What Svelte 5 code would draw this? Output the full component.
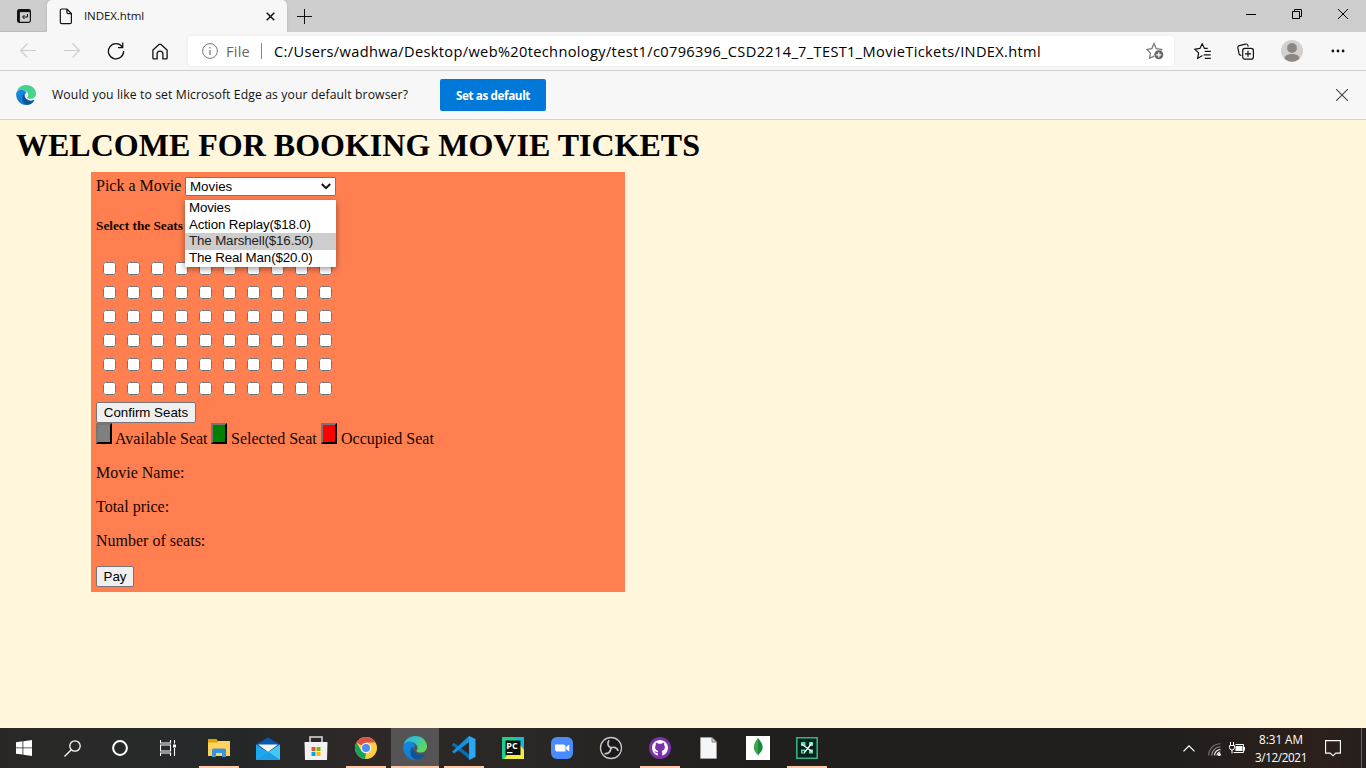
<script>
  const seatRows = Array.from({ length: 6 }, (_, r) => r);
  const seatCols = Array.from({ length: 10 }, (_, c) => c);
  const movies = ['Movies', 'Action Replay($18.0)', 'The Marshell($16.50)', 'The Real Man($20.0)'];
  const highlighted = 2;

  // Spreads a label's letter-spacing so that it fills the given width.
  function fit(node, width) {
    const w = node.getBoundingClientRect().width;
    const n = node.textContent.length;
    node.style.letterSpacing = (width - w) / n + 'px';
  }
</script>

<div class="screen">
  <header class="tabs">
    <div class="tabmenu">
      <svg width="16" height="16" viewBox="0 0 16 16" fill="none" stroke="#111" stroke-width="1.2"><rect x="1.6" y="1.6" width="12.8" height="12.8" rx="1.8"/><path d="M2 3h12" stroke-width="2.2"/><path d="M2.800 3v11" stroke-width="2.200"/><path d="M11.500 6v3H7M8.500 7 6.500 9l2 2" stroke-width="1"/></svg>
    </div>
    <div class="tab">
      <svg width="14" height="17" viewBox="0 0 14 17" fill="none" stroke="#111" stroke-width="1.2"><path d="M2.8 1h5.1l4.5 4.6v8.6a1.5 1.5 0 0 1-1.5 1.5H2.8a1.5 1.5 0 0 1-1.5-1.5V2.5A1.5 1.5 0 0 1 2.8 1zM7.9 1v3.2a1.4 1.4 0 0 0 1.4 1.4h3.1"/></svg>
      <span class="tabtitle"><span use:fit={60}>INDEX.html</span></span>
      <svg class="tabclose" width="9" height="9" viewBox="0 0 9 9" stroke="#111" stroke-width="1.5"><path d="M.7.7l7.6 7.6M8.3.7.7 8.3"/></svg>
    </div>
    <svg class="plus" width="15" height="15" viewBox="0 0 15 15" stroke="#111"><path d="M7.500 0v15M0 7.500h15"/></svg>
    <div class="windowbtns">
      <svg width="10" height="10" viewBox="0 0 10 10" stroke="#000"><path d="M0 5.5h10"/></svg>
      <svg width="10" height="10" viewBox="0 0 10 10" fill="none" stroke="#000"><path d="M.5 2.5h7v7h-7zM2.5 2.5v-2h7v7h-2"/></svg>
      <svg width="10" height="10" viewBox="0 0 10 10" stroke="#000"><path d="M0 0l10 10M10 0 0 10"/></svg>
    </div>
  </header>

  <nav class="toolbar">
    <div class="navicons">
      <svg width="16" height="16" viewBox="0 0 16 16" fill="none" stroke="#ccc" stroke-width="1.1"><path d="M16 7.500H.8M7.500.5.6 7.500l6.900 7"/></svg>
      <svg width="16" height="16" viewBox="0 0 16 16" fill="none" stroke="#ccc" stroke-width="1.1"><path d="M0 7.500h15.200M8.500.5l6.900 7-6.900 7"/></svg>
      <svg width="18" height="18" viewBox="0 0 18 18" fill="none" stroke="#111" stroke-width="1.3"><path d="M15.2 4.9A7.6 7.6 0 1 0 16.6 9M15.7.6v5H11"/></svg>
      <svg width="16" height="17" viewBox="0 0 16 17" fill="none" stroke="#111" stroke-width="1.3"><path d="M7 1.6.9 7v7.9c0 .6.3.9.9.9h3.3v-4.7a2.900 2.900 0 0 1 5.8 0v4.7h3.3c.6 0 .9-.3.9-.9V7L9 1.6a1.500 1.500 0 0 0-2 0z"/></svg>
    </div>
    <div class="address">
      <svg width="16" height="16" viewBox="0 0 16 16" fill="none" stroke="#777"><circle cx="8" cy="8" r="7.4"/><path d="M8 7v5M8 4v1.6" stroke-width="1.2"/></svg>
      <span class="scheme"><span use:fit={24}>File</span></span>
      <span class="divider"></span>
      <span class="url"><span use:fit={767}>C:/Users/wadhwa/Desktop/web%20technology/test1/c0796396_CSD2214_7_TEST1_MovieTickets/INDEX.html</span></span>
      <svg class="addstar" width="18" height="18" viewBox="0 0 18 18" fill="none" stroke="#777" stroke-width="1.2"><path d="M8 14.1l-4.400 2.200.8-5.200L1 7.500l4.800-.9L8 1.600l2.200 5 5.400.9-1 1"/><circle cx="12.8" cy="12.800" r="4.500" fill="#666" stroke="none"/><path d="M12.800 10.200v5.200M10.200 12.800h5.200" stroke="#fff"/></svg>
    </div>
    <div class="tools">
      <svg width="18" height="17" viewBox="0 0 18 17" fill="none" stroke="#111" stroke-width="1.2"><path d="M8.500 12.500l-4.800 2.900.9-5.500L.9 6.200l5-.8 2.300-4.600 2.300 4.600h3.200M10.800 8.300h6M9.700 11.800h7M10.800 15.300h6"/></svg>
      <svg width="18" height="17" viewBox="0 0 18 17" fill="none" stroke="#111" stroke-width="1.2"><path d="M4.400 12.400C2.800 12.500 2.400 12 2 10.700L.9 5.200c-.3-1.600.1-2.300 1.500-2.600l6-1.500c1.400-.3 2.100 0 2.500 1.300l.3 1.200"/><rect x="5.700" y="5.400" width="10.700" height="10.700" rx="2.200"/><path d="M11 7.800v6M8 10.800h6"/></svg>
      <svg width="22" height="22" viewBox="0 0 22 22"><circle cx="11" cy="11" r="11" fill="#d2d0ce"/><circle cx="11" cy="8" r="4.900" fill="#8b8683"/><path d="M3.600 18.800c0-3.200 3-4.800 7.400-4.800s7.400 1.600 7.400 4.800a11 11 0 0 1-14.800 0z" fill="#8b8683"/></svg>
      <svg width="14" height="4" viewBox="0 0 14 4" fill="#111"><circle cx="1.900" cy="2" r="1.400"/><circle cx="7" cy="2" r="1.400"/><circle cx="12.100" cy="2" r="1.400"/></svg>
    </div>
  </nav>

  {#snippet edge(size, top, mid, end)}
    <svg width={size} height={size} viewBox="0 0 24 24">
      <defs>
        <linearGradient id="eg{size}" x1="0" x2="1" y1="0" y2=".5"><stop offset="0" stop-color={top}/><stop offset=".5" stop-color={mid}/><stop offset="1" stop-color={end}/></linearGradient>
        <linearGradient id="eb{size}" x1="0" x2="1" y1="0" y2="1"><stop offset="0" stop-color="#138de0"/><stop offset="1" stop-color="#1172c8"/></linearGradient>
      </defs>
      <path fill="url(#eg{size})" d="M.6 9C1.800 3.700 6.300 0 12 0c7 0 12 4.800 12 10.400 0 3.800-2.900 6.100-6.400 6.100-2.800 0-4.200-.8-4.200-1.600 0-.6 1.200-1.100 1.200-3C14.600 8.500 10.500 5.600 6.500 5.700 4 5.800 1.800 7 .6 9z"/>
      <path fill="url(#eb{size})" d="M.1 11.200C.2 17 4 24 12.200 24c4.200 0 7.600-2.200 9.600-5.600-4 2.200-10 .6-11.200-4-.6-2.500.6-4.300 2-5C11.500 7 9 5.700 6.500 5.700 3 5.700.3 8.300.1 11.200z"/>
      <path fill="#10539b" d="M9.500 10.500c-4 4.500-2 12.700 4.500 13.300 3.500-.4 6-2.300 8-5.300.3-.6-.1-.8-.6-.5-5 2.500-11.400-1.200-11.900-7.500z"/>
    </svg>
  {/snippet}

  <section class="prompt">
    {@render edge(20, '#3fcf96', '#45d08c', '#4ad48a')}
    <span class="question"><span use:fit={356}>Would you like to set Microsoft Edge as your default browser?</span></span>
    <div class="setdefault"><span use:fit={74}>Set as default</span></div>
    <svg class="dismiss" width="12" height="12" viewBox="0 0 12 12" stroke="#444" stroke-width="1.1"><path d="M0 0l12 12M12 0 0 12"/></svg>
  </section>

  <main>
    <h1><span use:fit={684}>WELCOME FOR BOOKING MOVIE TICKETS</span></h1>
    <div class="booking">
      <div class="pick">
        <span>Pick a Movie</span>
        <div class="select">
          <span>Movies</span>
          <svg width="10" height="7" viewBox="0 0 10 7" fill="none" stroke="#111" stroke-width="2"><path d="M.8 1l4.200 4.200L9.200 1"/></svg>
          <div class="menu">
            {#each movies as m, i}
              <div class="option" class:active={i === highlighted}>{m}</div>
            {/each}
          </div>
        </div>
      </div>
      <h5>Select the Seats</h5>
      <div class="seats">
        {#each seatRows as r}
          {#each seatCols as c}
            <input type="checkbox" aria-label="Seat {r * 10 + c + 1}" />
          {/each}
        {/each}
      </div>
      <div class="btn confirm">Confirm Seats</div>
      <div class="legend">
        <i class="gray"></i><span class="l1">Available Seat</span>
        <i class="green"></i><span class="l2">Selected Seat</span>
        <i class="red"></i><span>Occupied Seat</span>
      </div>
      <p>Movie Name:</p>
      <p>Total price:</p>
      <p>Number of seats:</p>
      <div class="btn pay">Pay</div>
    </div>
  </main>

  <footer>
    <div class="system">
      <div><svg width="16" height="16" viewBox="0 0 16 16" fill="#fff"><path d="M0 2.200 6.500 1.300v6.200H0zM7.300 1.200 16 0v7.500H7.300zM0 8.300h6.500v6.300L0 13.700zM7.300 8.300H16V16l-8.700-1.200z"/></svg></div>
      <div><svg width="17" height="17" viewBox="0 0 17 17" fill="none" stroke="#fff" stroke-width="1.300"><circle cx="11" cy="6" r="5.200"/><path d="M7.300 9.700.5 16.500"/></svg></div>
      <div><svg width="16" height="16" viewBox="0 0 16 16" fill="none" stroke="#fff" stroke-width="2"><circle cx="8" cy="8" r="6.900"/></svg></div>
      <div><svg width="16" height="16" viewBox="0 0 16 16" fill="none" stroke="#fff" stroke-width="1.100"><path d="M.5 0v3h10V0M.5 16v-3h10v3M.5 5h10v6H.5zM14.500 0v3.500M14.500 8v8"/><path d="M13 4.500h3v3h-3z" fill="#fff" stroke="none"/></svg></div>
    </div>
    <div class="apps">
      <div class="run"><svg width="22" height="20" viewBox="0 0 22 20"><path fill="#e2a100" d="M0 1h8.500l1.500 2H22v3H0z"/><path fill="#ffd35c" d="M0 4.500h9L10.500 3H22v15H0z"/><path fill="#3c94da" d="M4 12a1.500 1.500 0 0 1 1.500-1.500h11A1.500 1.500 0 0 1 18 12v7h-4v-4H8v4H4z"/></svg></div>
      <div><svg width="24" height="23" viewBox="0 0 24 23"><path fill="#075ab0" d="M0 7.500 12 .5l12 7v3H0z"/><path fill="#f4f4f4" d="M2 7.500h20L12 15z"/><path fill="#1ca7f0" d="M0 7.500 12 15 24 23H0z"/><path fill="#42c8f7" d="M24 7.500V23L12 15z"/><path fill="#1b9fe8" d="M0 23l12-8 12 8z"/></svg></div>
      <div class="store"><svg width="24" height="24" viewBox="0 0 24 24"><path d="M6 7V1h12v6" fill="none" stroke="#ddd" stroke-width="1.500"/><path fill="#f1f1f1" d="M.5 6h23L23 24H1z"/><path fill="#f25022" d="M7.500 11h4v4h-4z"/><path fill="#7fba00" d="M12.500 11h4v4h-4z"/><path fill="#00a4ef" d="M7.500 16h4v4h-4z"/><path fill="#ffb900" d="M12.500 16h4v4h-4z"/></svg></div>
      <div class="run"><svg width="22" height="22" viewBox="0 0 22 22"><circle cx="11" cy="11" r="11" fill="#ffcd40"/><path fill="#de5246" d="M11 11 1.500 5.500A11 11 0 0 1 20.500 5.500H11z"/><path fill="#1aa15f" d="M1.500 5.500 6.500 14 11 16l-1 6A11 11 0 0 1 1.500 5.500z"/><circle cx="11" cy="11" r="5.200" fill="#f5f5f5"/><circle cx="11" cy="11" r="4" fill="#4d8bf5"/></svg></div>
      <div class="run current">{@render edge(24, '#2bb0e6', '#33c4c4', '#5fd858')}</div>
      <div class="run"><svg width="24" height="24" viewBox="0 0 24 24"><path fill="#0071b8" d="M0 8.300 2 6.700 18 19v4.700L.3 9.300z"/><path fill="#1492dc" d="M0 15.700 17 0l1.500 5L2 17.400z"/><path fill="#28a9ef" d="M17 0l6.500 3v18L17 24z"/></svg></div>
      <div><svg width="22" height="22" viewBox="0 0 22 22"><path fill="#20cf88" d="M0 0h22v22H0z"/><path fill="#f4ec43" d="M2 22 18 3l4 9v10z"/><path fill="#18b8d4" d="M12 0h10v13z"/><path fill="#0c1110" d="M3.500 3.500h15V18h-15z"/><text x="4.300" y="11.500" fill="#fff" font-size="9" font-weight="700" font-family="Open Sans, sans-serif">PC</text><path fill="#fff" d="M5 15h5.500v1.200H5z"/></svg></div>
      <div><svg width="22" height="22" viewBox="0 0 22 22"><rect width="22" height="22" rx="6" fill="#4a8cff"/><path fill="#fff" d="M4 7.500h8.500a2 2 0 0 1 2 2v5H6a2 2 0 0 1-2-2zM15.200 9.800 18.300 7.500v7l-3.100-2.200z"/></svg></div>
      <div><svg width="24" height="24" viewBox="0 0 24 24" fill="none" stroke="#c8c8c8" stroke-width="1.300"><circle cx="12" cy="12" r="10.500" fill="#1b191c"/><path d="M10 4.200c-2.200 3.200-1 6.300 1.800 7.600M11.800 12c2.800-1.600 6.500-.5 7.400 3M11.800 12c.2 3.600-2.600 6.200-6.200 5.600" stroke-width="1.700"/><circle cx="12" cy="12" r="1.200" fill="#c8c8c8" stroke="none"/></svg></div>
      <div class="run"><svg width="22" height="22" viewBox="0 0 22 22"><circle cx="11" cy="11" r="11" fill="#7c32a8"/><path fill="#fff" d="M11 3a8 8 0 0 0-2.800 15.500c.5.100.6-.2.600-.5v-2c-2.200.5-2.700-.9-3.400-1.800 1.600-.2 1.700 1.400 3.400 1 .1-.6.300-1 .6-1.200-3.500-.6-4-4-2.500-5.900-.3-1-.1-1.800.2-2.300.8 0 1.700.6 2.300 1h3.200c.6-.4 1.500-1 2.300-1 .3.500.5 1.300.2 2.300 1.500 1.900 1 5.300-2.500 5.900.4.400.6 1 .6 1.800v2.200c0 .3.200.6.600.5A8 8 0 0 0 11 3z"/></svg></div>
      <div class="doc"><svg width="17" height="22" viewBox="0 0 17 22"><path fill="#f5f6f7" stroke="#aaa" stroke-width=".6" d="M.5.500h11.500l4.500 4.500v16.500H.5z"/><path fill="#ddd" stroke="#666" stroke-width=".8" d="M12 .5V5h4.500z"/></svg></div>
      <div><svg width="24" height="24" viewBox="0 0 24 24"><path fill="#fff" d="M0 0h24v24H0z"/><path fill="#47a248" d="M12 2C9.500 5 7.800 7.700 7.800 11.300c0 3 1.500 5.400 3.700 7.200l.5 2z"/><path fill="#168b40" d="M12 2c2.500 3 4.700 5.700 4.700 9.300 0 3-2 5.400-4.200 7.200l-.5 2z"/></svg></div>
      <div class="run"><svg width="22" height="22" viewBox="0 0 22 22"><path fill="#04231d" stroke="#35b185" stroke-width="1.600" d="M.8.800h20.400v20.400H.8z"/><path fill="#5fdcae" d="M5 5h4.500v4H5zM13 5h4v4h-4zM5 12.500h4v4H5zM13 12.500h4v4h-4z"/><path fill="none" stroke="#f0fff8" stroke-width="1.300" d="M5.500 7 16 14.500M8 16 16 6"/><path fill="#04231d" d="M6.500 14h1.500v1.500H6.500z"/></svg></div>
    </div>
    <div class="tray">
      <svg class="up" width="12" height="7" viewBox="0 0 12 7" fill="none" stroke="#fff" stroke-width="1.300"><path d="M.5 6.400 6 .9l5.500 5.500"/></svg>
      <svg class="wifi" width="13" height="13" viewBox="0 0 13 13" fill="none" stroke="#777" stroke-width="1.100"><path d="M.7 12.500A11.700 11.700 0 0 1 12.400.8"/><path d="M3.700 12.500a8.700 8.700 0 0 1 8.700-8.700" stroke="#999"/><path d="M6.500 12.500a6 6 0 0 1 6-6M9 12.500A3.400 3.400 0 0 1 12.400 9" stroke="#eee"/><circle cx="11.300" cy="11.500" r="1.500" fill="#fff" stroke="none"/></svg>
      <svg class="battery" width="17" height="12" viewBox="0 0 17 12" fill="none" stroke="#fff"><path d="M1.500 0v3M4.500 0v3M.5 3.500h5v2a2.500 2.500 0 0 1-5 0zM3 8v3.500M6.500 2.500h8v8H4.500M15.500 5v3.500"/><path fill="#fff" stroke="none" d="M6.500 4h7v5h-7z"/></svg>
      <div class="clock"><div><span use:fit={44}>8:31 AM</span></div><div><span use:fit={52}>3/12/2021</span></div></div>
      <svg class="note" width="16" height="17" viewBox="0 0 16 17" fill="none" stroke="#fff" stroke-width="1.100"><path d="M.6.600h14.800v12.500h-4.600L8 15.800l-2.800-2.700H.6z"/></svg>
      <span class="peek"></span>
    </div>
  </footer>
</div>

<style>
  :global(body) { background: #fff6dc; overflow: hidden; }
  .screen { width: 1366px; height: 768px; display: flex; flex-direction: column; overflow: hidden; background: #fff6dc; font-family: 'Open Sans', 'Noto Sans', sans-serif; color: #111; }
  svg { display: block; flex: none; }
  span { white-space: nowrap; }

  .tabs { height: 32px; flex: none; display: flex; align-items: center; background: #cdcdcd; }
  .tabmenu { width: 47px; height: 32px; box-sizing: border-box; padding-left: 16px; display: flex; align-items: center; border-bottom: 1px solid #bcbcbc; border-radius: 0 0 4px 0; }
  .tab { width: 240px; height: 32px; box-sizing: border-box; background: #f7f7f7; border-radius: 5px 5px 0 0; display: flex; align-items: center; padding-left: 12px; box-shadow: 0 0 2px #aaa; }
  .tabtitle { font-size: 11.500px; margin-left: 11px; width: 182px; padding-bottom: 1px; }
  .plus { margin-left: 10px; }
  .windowbtns { margin-left: auto; padding: 0 18px 4px 0; display: flex; gap: 36px; }

  .toolbar { height: 39px; box-sizing: border-box; flex: none; display: flex; align-items: center; background: #f7f7f7; border-bottom: 1px solid #cfcfcf; }
  .navicons { width: 168px; padding-left: 20px; display: flex; align-items: center; gap: 28px; }
  .navicons svg:nth-child(3) { margin: 0 -1px; }
  .address { width: 986px; height: 30px; box-sizing: border-box; background: #fff; border-radius: 4px; display: flex; align-items: center; padding-left: 14px; box-shadow: 0 0 3px #e6e6e6; }
  .scheme { font-size: 14.500px; margin-left: 8px; width: 35px; color: #666; }
  .divider { width: 1px; height: 16px; background: #888; }
  .url { font-size: 14.600px; margin-left: 12px; width: 872px; color: #000; }
  .tools { display: flex; align-items: center; padding-left: 20px; }
  .tools svg:nth-child(2) { margin-left: 25px; }
  .tools svg:nth-child(3) { margin-left: 26px; }
  .tools svg:nth-child(4) { margin-left: 28px; }

  .prompt { height: 49px; box-sizing: border-box; flex: none; display: flex; align-items: center; background: #f7f7f7; border-bottom: 1px solid #d6d2c8; padding-left: 16px; }
  .question { font-size: 12.200px; margin-left: 16px; width: 388px; padding-bottom: 2px; }
  .setdefault { width: 106px; height: 32px; border-radius: 2px; background: #0078d7; color: #fff; font-size: 11.700px; font-weight: 700; display: flex; align-items: center; justify-content: center; }
  .dismiss { margin-left: auto; margin-right: 18px; }

  main { height: 608px; box-sizing: border-box; flex: none; padding-top: 7px; background: #fff6dc; font-family: 'Liberation Serif', serif; font-size: 16px; color: #000; }
  h1 { margin: 0 0 0 16px; font-size: 32px; line-height: 37px; height: 45px; }
  .booking { width: 534px; height: 420px; box-sizing: border-box; margin-left: 91px; padding: 5px 0 0 5px; background: #ff7f50; color: #140600; }
  .pick { display: flex; height: 19px; }
  .pick > span { width: 89px; line-height: 18px; }
  .select { position: relative; width: 151px; height: 19px; box-sizing: border-box; border: 1px solid #767676; border-radius: 1px; background: #fff; color: #000; font: 13.333px/17px 'Liberation Sans', sans-serif; display: flex; align-items: center; justify-content: space-between; padding: 0 4px; }
  .menu { position: absolute; z-index: 2; left: -1px; top: 22px; width: 151px; height: 67px; background: #fff; box-shadow: 0 2px 6px rgba(0, 0, 0, .4); }
  .option { height: 16.670px; line-height: 16.500px; padding-left: 4px; white-space: nowrap; letter-spacing: -.13px; }
  .option.active { background: #cdcdcd; color: #222; }
  h5 { margin: 22px 0 0; font-size: 13.280px; line-height: 15px; }
  .seats { margin: 20px 0 0 2px; display: grid; grid-template-columns: repeat(10, 24px); grid-auto-rows: 24px; place-items: center; width: 240px; }
  .seats input { margin: 7px 0 0 -2px; width: 13px; height: 13px; }
  .btn { box-sizing: border-box; height: 21px; border: 1px solid #767676; border-radius: 2px; background: #efefef; color: #000; font: 13.333px/19px 'Liberation Sans', sans-serif; text-align: center; }
  .confirm { width: 100px; margin-top: 5px; }
  .legend { height: 31px; display: flex; align-items: flex-start; }
  .legend i { width: 16px; height: 21px; box-sizing: border-box; border: 2px outset #767676; border-color: #767676 #212121 #212121 #767676; }
  .legend span { line-height: 18px; margin-top: 7px; margin-left: 4px; }
  .legend .l1 { width: 96px; margin-left: 3px; }
  .legend .l2 { width: 90px; }
  .gray { background: gray; }
  .green { background: green; }
  .red { background: red; }
  p { margin: 0 0 16px; line-height: 18px; }
  .legend + p { margin-top: 10px; }
  .pay { width: 38px; }

  footer { height: 40px; flex: none; display: flex; background: linear-gradient(90deg, #282725, #282b2b 12%, #242728 18%, #2e2928 25%, #292725 40%, #211f1e 55%, #201e1d 85%, #2c201b 97%, #241f1d); }
  .system { display: flex; }
  .system div, .apps div { width: 48px; height: 40px; display: flex; align-items: center; justify-content: center; }
  .apps { display: flex; gap: 1px; margin-left: 3px; }
  .apps .store, .apps .doc { padding-right: 2px; box-sizing: border-box; }
  .run { background: linear-gradient(#ffc8a8, #ffc8a8) center bottom / 40px 2px no-repeat; }
  .apps .current { background: linear-gradient(#ffc8a8, #ffc8a8) center bottom / 48px 2px no-repeat #555353; }
  .tray { margin-left: auto; width: 183px; display: flex; align-items: center; color: #fff; }
  .wifi { margin-left: 13px; margin-top: 2px; }
  .battery { margin-left: 8px; }
  .clock { width: 60px; margin-left: 5px; text-align: center; font-size: 11.700px; line-height: 18px; }
  .clock span { display: inline-block; }
  .note { margin-left: 14px; }
  .peek { width: 1px; height: 40px; background: #666; margin-left: 20px; }
</style>
